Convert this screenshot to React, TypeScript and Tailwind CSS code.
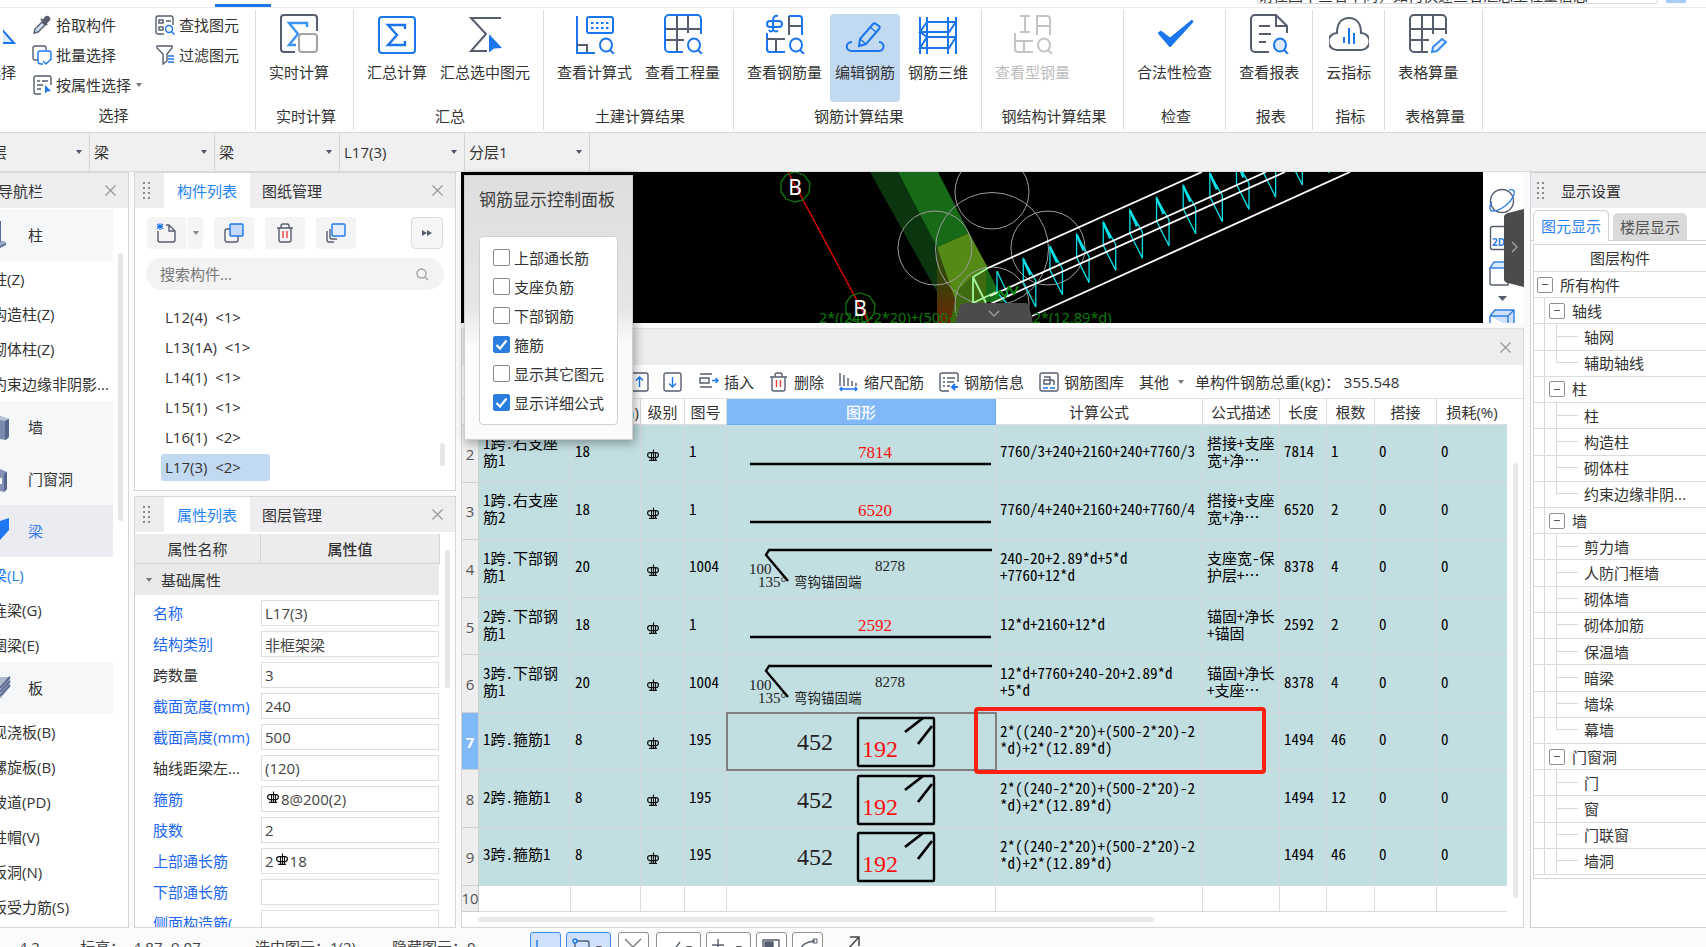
import React from "react";

const TABLE_FONT =
  "font-['Noto_Sans_CJK_SC',sans-serif] [font-feature-settings:'hwid'] text-[15px] leading-[17px] text-black";

/* ---------- shared pieces ---------- */

function Caret({ className = "" }: { className?: string }) {
  return (
    <svg width="6" height="4" viewBox="0 0 6 4" className={className} aria-hidden="true">
      <path d="M0 0h6L3 4z" fill="currentColor" />
    </svg>
  );
}

function Grip() {
  return (
    <svg width="9" height="19" viewBox="0 0 9 19" fill="#8a8a8a" aria-hidden="true" className="shrink-0">
      {[0, 5, 10, 15].map((y) => (
        <g key={y}>
          <rect x="0" y={y + 1} width="2" height="2" />
          <rect x="5" y={y + 1} width="2" height="2" />
        </g>
      ))}
    </svg>
  );
}

function CloseButton() {
  return (
    <button type="button" aria-label="关闭" className="flex h-5 w-5 items-center justify-center">
      <svg width="11" height="11" viewBox="0 0 11 11" stroke="#9b9b9b" strokeWidth="1.3" aria-hidden="true">
        <path d="M.5.5l10 10M10.500.5l-10 10" />
      </svg>
    </button>
  );
}

function Rebar() {
  return (
    <svg width="12" height="13" viewBox="0 0 12 13" fill="none" stroke="#111" strokeWidth="1.200" aria-label="三级钢" className="inline-block">
      <rect x="0.600" y="3.600" width="10.800" height="5" rx="2.500" />
      <path d="M4.500 3v8.500M6.500 0.500v11M8.500 3v8.500M2 11.400h8" strokeWidth="1.100" />
    </svg>
  );
}

/* ---------- ribbon icons ---------- */

const B = "#1b76ee";
const G = "#555d6e";

type IconProps = { children: React.ReactNode };
function Big({ children }: IconProps) {
  return (
    <svg width="40" height="40" viewBox="0 0 40 40" fill="none" strokeWidth="2" stroke={G} aria-hidden="true">
      {children}
    </svg>
  );
}
function Small({ children }: IconProps) {
  return (
    <svg width="20" height="20" viewBox="0 0 20 20" fill="none" strokeWidth="1.400" stroke={G} aria-hidden="true" className="shrink-0">
      {children}
    </svg>
  );
}
const Lens = ({ x = 31, y = 31, c = B, f = "none" }: { x?: number; y?: number; c?: string; f?: string }) => (
  <g stroke={c}>
    <ellipse cx={x} cy={y} rx="6" ry="6.500" fill={f} />
    <path d={`M${x + 4} ${y + 5}l4 4`} />
  </g>
);

const icons = {
  realtime: (
    <Big>
      <path d="M16 38H5a3 3 0 0 1-3-3V4a3 3 0 0 1 3-3h30a3 3 0 0 1 3 3v13" />
      <path d="M28 13V9H10l9 11-9 11h7" stroke="#3a93f8" strokeWidth="2.400" />
      <rect x="20" y="20" width="18" height="18" rx="3" stroke="#a3a3a3" fill="#fff" />
    </Big>
  ),
  sum: (
    <Big>
      <rect x="2" y="3" width="36" height="36" rx="3" stroke={B} />
      <path d="M28 15v-4H11l9 10-9 10h17v-4" stroke={B} strokeWidth="2.400" />
    </Big>
  ),
  sumSel: (
    <Big>
      <path d="M36 4H6l15 16L6 37h16" />
      <path d="M24 20l13 14-8 .500-5 4z" fill={B} stroke="none" />
    </Big>
  ),
  formula: (
    <Big>
      <path d="M2 2v37h18" stroke={B} />
      <path d="M2 31h10v7" />
      <rect x="12" y="3" width="26" height="16" rx="2" stroke={B} />
      <path d="M16 9h19M16 14h19" stroke={B} strokeDasharray="2.500 2.500" />
      <Lens />
    </Big>
  ),
  quantity: (
    <Big>
      <path d="M2 15h36M2 26h19M14 1v37M25 1v18" />
      <path d="M20 38H6a4 4 0 0 1-4-4V5a4 4 0 0 1 4-4h28a4 4 0 0 1 4 4v15" stroke={B} />
      <Lens />
    </Big>
  ),
  rebarQty: (
    <Big>
      <rect x="2" y="7" width="15" height="6" rx="3" stroke={B} />
      <path d="M13 2c-3-1-5 1-5 5v7c0 3 2 4 5 3M4 16c1 2 3 2 4 0" stroke={B} />
      <path d="M24 21V2M24 12h12" />
      <path d="M24 2h10a3 3 0 0 1 3 3v16" stroke={B} />
      <path d="M2 19v16a3 3 0 0 0 3 3h15" stroke={B} />
      <path d="M2 25h18M11 25v13" />
      <Lens />
    </Big>
  ),
  edit: (
    <Big>
      <g stroke={B}>
        <path d="M7 28c-7 0-7 9 0 9h27c6 0 6-9 0-9" />
        <path d="M14 32l1-7 13-15a2 2 0 0 1 3 0l3 2a2 2 0 0 1 0 3L21 30z" />
        <path d="M15 25l6 5M25 13l6 5" strokeWidth="1.400" />
      </g>
    </Big>
  ),
  rebar3d: (
    <Big>
      <g stroke={B}>
        <path d="M2 3v37M9 3v37M30 3v37M38 3v37" />
        <path d="M38 8H9L2 18h29l7-10M38 23H9L2 34h29l7-11M9 23l-7-5M9 8h21" />
      </g>
    </Big>
  ),
  steel: (
    <Big>
      <g stroke="#c4c4c4">
        <path d="M7 2h10M12 2v16M7 18h10M24 21V2h10a3 3 0 0 1 3 3v16M24 12h12" />
        <path d="M2 19v16a3 3 0 0 0 3 3h15M2 27h18M11 27v11" />
      </g>
      <Lens c="#c4c4c4" />
    </Big>
  ),
  check: (
    <Big>
      <path d="M3 19l3-2 9 7L37 6l1 2-23 25z" fill={B} stroke={B} strokeWidth="1" />
    </Big>
  ),
  report: (
    <Big>
      <path d="M20 38H6a4 4 0 0 1-4-4V5a4 4 0 0 1 4-4h21l11 11v7M27 1v11h11" />
      <path d="M10 12h11M10 20h12M10 28h7" />
      <Lens f="#dcebfd" />
    </Big>
  ),
  cloud: (
    <Big>
      <path d="M8 36a8 8 0 0 1 0-17C8 10 12 4 20 4s12 6 12 15a8 8 0 0 1 0 17z" />
      <path d="M15 23v6M20 14v16M25 19v11" stroke={B} />
    </Big>
  ),
  sheet: (
    <Big>
      <path d="M20 38H6a4 4 0 0 1-4-4V5a4 4 0 0 1 4-4h28a4 4 0 0 1 4 4v15M2 15h36M2 26h19M14 1v37M25 1v19" />
      <path d="M24 38l1-5 9-8 4 3-9 9z" stroke="#3a8bf2" fill="#e3efff" />
    </Big>
  ),
};

function RibbonGroup({ title, className = "", children }: { title: string; className?: string; children: React.ReactNode }) {
  return (
    <section className={`my-0.5 flex shrink-0 flex-col border-r border-[#dcdcdc] pl-2 pr-2 ${className}`}>
      <div className="flex h-[92px] gap-[3px] pt-1">{children}</div>
      <h2 className="flex h-8 items-center justify-center pl-[3px] text-[15px] font-normal">{title}</h2>
    </section>
  );
}

function RibbonButton({ icon, label, active, disabled }: { icon: React.ReactNode; label: string; active?: boolean; disabled?: boolean }) {
  return (
    <button
      type="button"
      disabled={disabled}
      className={`flex h-[88px] shrink-0 flex-col items-center rounded px-[5px] ${active ? "bg-[#c2d9f2]" : ""} ${disabled ? "text-[#bdbdbd]" : ""}`}
    >
      {icon}
      <span className="mt-[7px] whitespace-nowrap leading-[22px]">{label}</span>
    </button>
  );
}

function SmallButton({ icon, label, menu }: { icon: React.ReactNode; label: string; menu?: boolean }) {
  return (
    <button type="button" className="flex h-[30px] items-center gap-1 whitespace-nowrap">
      {icon}
      <span>{label}</span>
      {menu && <Caret className="ml-px text-[#777]" />}
    </button>
  );
}

function Ribbon() {
  return (
    <div className="flex h-[126px] shrink-0 overflow-hidden border-y border-t-[#ececec] border-b-[#dadada] bg-white">
      <section className="my-0.5 flex w-64 shrink-0 flex-col border-r border-[#dcdcdc]">
        <div className="flex h-[92px]">
          <button type="button" className="flex w-4 flex-col items-end overflow-hidden pt-1">
            <svg width="13" height="40" viewBox="0 0 13 40" fill="#dcebfd" stroke={B} strokeWidth="2" aria-hidden="true">
              <path d="M-8 8L11 29H-8" />
            </svg>
            <span className="mt-[7px] whitespace-nowrap leading-[22px]">选择</span>
          </button>
          <div className="ml-4 flex flex-col">
            <SmallButton
              label="拾取构件"
              icon={
                <Small>
                  <path d="M2 18l1-4 7-7 3 3-7 7z" fill="#cfe0f6" />
                  <path d="M9 4l6 6M11 6l3-4a2.200 2.200 0 0 1 3 3l-4 4z" fill={G} strokeWidth="2" />
                </Small>
              }
            />
            <SmallButton
              label="批量选择"
              icon={
                <Small>
                  <path d="M6 15H3a2 2 0 0 1-2-2V3a2 2 0 0 1 2-2h9a2 2 0 0 1 2 2v2" />
                  <path d="M11 19H9a3 3 0 0 1-3-3V8a2 2 0 0 1 2-2h9a2 2 0 0 1 2 2v7M11 16l3 3 5-5" stroke={B} />
                </Small>
              }
            />
            <SmallButton
              menu
              label="按属性选择"
              icon={
                <Small>
                  <path d="M9 19H4a2 2 0 0 1-2-2V3a2 2 0 0 1 2-2h13a2 2 0 0 1 2 2v7M5 6h3M10 6h6M5 10h6M5 14h4" />
                  <path d="M13 10l6 6-4 .500-2 2z" fill={B} stroke="none" />
                </Small>
              }
            />
          </div>
          <div className="ml-[13px] flex flex-col">
            <SmallButton
              label="查找图元"
              icon={
                <Small>
                  <path d="M9 19H3a2 2 0 0 1-2-2V3a2 2 0 0 1 2-2h13a2 2 0 0 1 2 2v7M4 5h4v3H4zM11 6h5M4 12h4v3H4z" />
                  <circle cx="14" cy="14" r="3.500" stroke={B} />
                  <path d="M16.500 16.500l3 3" stroke={B} />
                </Small>
              }
            />
            <SmallButton
              label="过滤图元"
              icon={
                <Small>
                  <path d="M2 1h15v2l-5 6v7l-4 3V9L2 3z" />
                  <path d="M13 11h6M13 14h6M13 17h6" stroke={B} />
                </Small>
              }
            />
          </div>
        </div>
        <h2 className="flex h-8 items-center justify-center pr-7 text-[15px] font-normal">选择</h2>
      </section>
      <RibbonGroup title="实时计算" className="w-[98px]">
        <RibbonButton icon={icons.realtime} label="实时计算" />
      </RibbonGroup>
      <RibbonGroup title="汇总">
        <RibbonButton icon={icons.sum} label="汇总计算" />
        <RibbonButton icon={icons.sumSel} label="汇总选中图元" />
      </RibbonGroup>
      <RibbonGroup title="土建计算结果">
        <RibbonButton icon={icons.formula} label="查看计算式" />
        <RibbonButton icon={icons.quantity} label="查看工程量" />
      </RibbonGroup>
      <RibbonGroup title="钢筋计算结果">
        <RibbonButton icon={icons.rebarQty} label="查看钢筋量" />
        <RibbonButton icon={icons.edit} label="编辑钢筋" active />
        <RibbonButton icon={icons.rebar3d} label="钢筋三维" />
      </RibbonGroup>
      <RibbonGroup title="钢结构计算结果" className="w-[142px]">
        <RibbonButton icon={icons.steel} label="查看型钢量" disabled />
      </RibbonGroup>
      <RibbonGroup title="检查">
        <RibbonButton icon={icons.check} label="合法性检查" />
      </RibbonGroup>
      <RibbonGroup title="报表">
        <RibbonButton icon={icons.report} label="查看报表" />
      </RibbonGroup>
      <RibbonGroup title="指标">
        <RibbonButton icon={icons.cloud} label="云指标" />
      </RibbonGroup>
      <RibbonGroup title="表格算量" className="w-[98px]">
        <RibbonButton icon={icons.sheet} label="表格算量" />
      </RibbonGroup>
    </div>
  );
}

/* ---------- selector bar ---------- */

function Picker({ label, value, clipped }: { label: string; value: string; clipped?: boolean }) {
  return (
    <div className={`relative flex shrink-0 items-center overflow-hidden border-r border-[#d4d4d4] ${clipped ? "w-[90px]" : "w-[125px]"}`}>
      <select aria-label={label} className={`h-full w-full appearance-none bg-transparent pl-1 outline-none ${clipped ? "-ml-3" : ""}`}>
        <option>{value}</option>
      </select>
      <Caret className="pointer-events-none absolute right-[7px] text-[#4e5669]" />
    </div>
  );
}

/* ---------- left navigation ---------- */

type NavItem = { name: string; kind: "cat" | "sub"; active?: boolean };
const navItems: NavItem[] = [
  { name: "柱", kind: "cat" },
  { name: "柱(Z)", kind: "sub" },
  { name: "构造柱(Z)", kind: "sub" },
  { name: "砌体柱(Z)", kind: "sub" },
  { name: "约束边缘非阴影...", kind: "sub" },
  { name: "墙", kind: "cat" },
  { name: "门窗洞", kind: "cat" },
  { name: "梁", kind: "cat", active: true },
  { name: "梁(L)", kind: "sub", active: true },
  { name: "连梁(G)", kind: "sub" },
  { name: "圈梁(E)", kind: "sub" },
  { name: "板", kind: "cat" },
  { name: "现浇板(B)", kind: "sub" },
  { name: "螺旋板(B)", kind: "sub" },
  { name: "坡道(PD)", kind: "sub" },
  { name: "柱帽(V)", kind: "sub" },
  { name: "板洞(N)", kind: "sub" },
  { name: "板受力筋(S)", kind: "sub" },
];

const navIcons: Record<string, React.ReactNode> = {
  柱: (
    <g>
      <path d="M0 0h1v20l5 2v2l-6 3z" fill="#5c6b92" />
      <path d="M0 21l4-1 2 2-6 3z" fill="#9aa7c6" />
    </g>
  ),
  墙: (
    <g>
      <path d="M0 3l9 3v18l-3 3-6-1z" fill="#7b8bb0" />
      <path d="M0 3l9 3-4 2-5-1z" fill="#b6c0d6" />
      <path d="M5 8l4-2v18l-4 3z" fill="#55668f" />
    </g>
  ),
  门窗洞: (
    <g>
      <path d="M0 4l7 3v17l-3 3-4-1z" fill="#8592b5" />
      <path d="M4 9l3-2v17l-3 3z" fill="#55668f" />
      <path d="M0 13h2v6H0z" fill="#fff" />
    </g>
  ),
  梁: <path d="M0 4l9-3v12l-9 10z" fill="#1f78f0" />,
  板: (
    <g>
      <path d="M0 3h10v10L0 25z" fill="#b1bbd0" />
      <path d="M0 14L10 3M0 18L10 7M0 22l10-11" stroke="#5c6b92" strokeWidth="2" />
    </g>
  ),
};

function NavPanel() {
  return (
    <aside className="flex w-[129px] shrink-0 flex-col overflow-hidden border-y border-r border-[#d6d6d8] bg-white">
      <header className="flex h-[35px] shrink-0 items-center justify-between bg-[#eeeef1] pr-2">
        <h2 className="-ml-[2px] text-[15px] font-normal">导航栏</h2>
        <CloseButton />
      </header>
      <nav className="flex min-h-0 flex-1 items-start justify-between overflow-hidden">
        <ul className="w-[113px] pt-px">
          {navItems.map((it) =>
            it.kind === "cat" ? (
              <li key={it.name} className={it.active ? "bg-[#eaecf1] text-[#3f7ff0]" : "bg-[#f5f7f9]"}>
                <button type="button" className="flex h-[52px] w-full items-center">
                  <svg width="12" height="28" viewBox="0 0 12 28" aria-hidden="true">
                    {navIcons[it.name]}
                  </svg>
                  <span className="pl-4">{it.name}</span>
                </button>
              </li>
            ) : (
              <li key={it.name} className={`-ml-2 flex h-[35px] items-center whitespace-nowrap ${it.active ? "text-[#1b7cf2]" : ""}`}>
                <a href="#component">{it.name}</a>
              </li>
            ),
          )}
        </ul>
        <div className="mr-[5px] mt-[45px] h-[268px] w-[5px] rounded-full bg-[#e6e6e6]" />
      </nav>
    </aside>
  );
}

/* ---------- component list and properties ---------- */

function TabHeader({ tabs }: { tabs: [string, string] }) {
  return (
    <header className="flex h-[35px] shrink-0 items-center bg-[#eeeef1] pl-2 pr-2">
      <Grip />
      <div role="tablist" className="ml-3 flex h-full flex-1">
        <button role="tab" aria-selected="true" type="button" className="bg-white px-[13px] text-[#1f82f5]">
          {tabs[0]}
        </button>
        <button role="tab" aria-selected="false" type="button" className="px-3">
          {tabs[1]}
        </button>
      </div>
      <CloseButton />
    </header>
  );
}

const components = ["L12(4)  <1>", "L13(1A)  <1>", "L14(1)  <1>", "L15(1)  <1>", "L16(1)  <2>", "L17(3)  <2>"];

function ToolButton({ label, children }: { label: string; children: React.ReactNode }) {
  return (
    <button type="button" aria-label={label} className="flex h-8 w-10 items-center justify-center rounded bg-[#f4f4f4]">
      {children}
    </button>
  );
}

function ComponentPanel() {
  return (
    <section className="flex h-[319px] shrink-0 flex-col border border-[#d6d6d8] bg-white">
      <TabHeader tabs={["构件列表", "图纸管理"]} />
      <div className="mt-[9px] flex items-center gap-[11px] pl-3 pr-3">
        <div className="flex gap-px">
          <ToolButton label="新建">
            <Small>
              <path d="M1 8v9a2 2 0 0 0 2 2h13a2 2 0 0 0 2-2V8l-6-6H9M12 2v6h6" />
              <path d="M0 1l6 5M6 1L0 6M0 3.500h6M3 0v7" stroke={B} strokeWidth="1.200" />
            </Small>
          </ToolButton>
          <button type="button" aria-label="更多新建" className="flex h-8 w-[15px] items-center justify-center rounded-r bg-[#f4f4f4] text-[#888]">
            <Caret />
          </button>
        </div>
        <ToolButton label="复制">
          <Small>
            <rect x="1" y="6" width="13" height="13" rx="2" />
            <rect x="6" y="1" width="13" height="12" rx="1" fill="#c5daf6" stroke={B} />
          </Small>
        </ToolButton>
        <ToolButton label="删除">
          <Small>
            <path d="M2 5h16M4 5v12a2 2 0 0 0 2 2h8a2 2 0 0 0 2-2V5M6 5V3a2 2 0 0 1 2-2h4a2 2 0 0 1 2 2v2" />
            <path d="M8 8v7M12 8v7" stroke="#e8413c" />
          </Small>
        </ToolButton>
        <ToolButton label="层间复制">
          <Small>
            <path d="M1 8v9a2 2 0 0 0 2 2h5M4 6v8a2 2 0 0 0 2 2h5" />
            <rect x="6" y="1" width="13" height="12" rx="1" fill="#e3efff" stroke={B} />
          </Small>
        </ToolButton>
        <button type="button" aria-label="展开" className="ml-auto flex h-8 w-8 items-center justify-center rounded border border-[#dcdcdc] bg-[#f6f6f6]">
          <svg width="10" height="6" viewBox="0 0 10 6" fill={G} aria-hidden="true">
            <path d="M0 0l5 3-5 3zM5 0l5 3-5 3z" />
          </svg>
        </button>
      </div>
      <label className="mx-[11px] mt-[9px] flex h-8 items-center rounded-full bg-[#f3f3f3] pl-[14px] pr-[15px]">
        <input type="text" aria-label="搜索构件" placeholder="搜索构件..." className="min-w-0 flex-1 bg-transparent outline-none placeholder:text-[#777]" />
        <svg width="13" height="13" viewBox="0 0 13 13" fill="none" stroke="#a8a8a8" strokeWidth="1.500" aria-hidden="true">
          <circle cx="5.500" cy="5.500" r="4.500" />
          <path d="M9 9l3 3" />
        </svg>
      </label>
      <div className="mt-3 flex items-end justify-between pl-[26px] pr-[10px]">
        <ul>
          {components.map((c, i) => (
            <li key={c} className="flex h-[30px] items-center">
              <button
                type="button"
                className={`h-[27px] w-[109px] whitespace-pre rounded-[3px] pl-1 text-left ${i === components.length - 1 ? "bg-[#c2d9f2]" : ""}`}
              >
                {c}
              </button>
            </li>
          ))}
        </ul>
        <div className="mb-4 h-[23px] w-[5px] rounded-full bg-[#e6e6e6]" />
      </div>
    </section>
  );
}

type Prop = { name: string; text: string; key?: boolean };
const props: Prop[] = [
  { name: "名称", text: "L17(3)", key: true },
  { name: "结构类别", text: "非框架梁", key: true },
  { name: "跨数量", text: "3" },
  { name: "截面宽度(mm)", text: "240", key: true },
  { name: "截面高度(mm)", text: "500", key: true },
  { name: "轴线距梁左...", text: "(120)" },
  { name: "箍筋", text: "rebar:|8@200(2)", key: true },
  { name: "肢数", text: "2", key: true },
  { name: "上部通长筋", text: "rebar:2|18", key: true },
  { name: "下部通长筋", text: "", key: true },
  { name: "侧面构造筋(", text: "", key: true },
];

function PropertyValue({ id, text }: { id: string; text: string }) {
  const box = "h-[26px] w-[178px] border border-[#dedede] bg-white pl-[3px] text-[#444]";
  if (text.startsWith("rebar:")) {
    const [before, after] = text.slice(6).split("|");
    return (
      <div className={`flex items-center ${box}`}>
        {before && <span>{before}</span>}
        <span className="mx-0.5 flex items-center pb-1">
          <Rebar />
        </span>
        <input id={id} defaultValue={after} className="min-w-0 flex-1 bg-transparent outline-none" />
      </div>
    );
  }
  return <input id={id} defaultValue={text} className={`${box} outline-none`} />;
}

function PropertyPanel() {
  return (
    <section className="flex min-h-0 flex-1 flex-col overflow-hidden border border-[#d6d6d8] bg-white">
      <TabHeader tabs={["属性列表", "图层管理"]} />
      <div className="mt-0.5 flex min-h-0 flex-1 items-start justify-between overflow-hidden pr-[5px]">
        <div className="w-[305px]">
          <div className="flex h-[30px] border-b border-r border-[#d4d4d4] bg-[#ececec]">
            <div className="flex w-[126px] items-center justify-center border-r border-[#d4d4d4]">属性名称</div>
            <div className="flex flex-1 items-center justify-center font-medium">属性值</div>
          </div>
          <button type="button" className="flex h-[31px] w-[304px] items-center gap-[9px] bg-[#eaeaea] pl-[11px]">
            <Caret className="text-[#777]" />
            基础属性
          </button>
          {props.map((p, i) => (
            <div key={p.name} className="flex h-[31px] items-end pl-[18px]">
              <label htmlFor={`prop-${i}`} className={`w-[108px] whitespace-nowrap leading-[26px] ${p.key ? "text-[#2167f5]" : ""}`}>
                {p.name}
              </label>
              <PropertyValue id={`prop-${i}`} text={p.text} />
            </div>
          ))}
        </div>
        <div className="mt-4 h-[138px] w-[5px] rounded-full bg-[#e6e6e6]" />
      </div>
    </section>
  );
}

/* ---------- model canvas ---------- */

function Canvas() {
  const ties = Array.from({ length: 14 }, (_, i) => i);
  return (
    <svg
      viewBox="461 172 1022 151"
      preserveAspectRatio="xMinYMin slice"
      className="h-full min-w-0 flex-1 bg-black"
      role="img"
      aria-label="模型视图"
    >
      <defs>
        <linearGradient id="soil" x1="0" y1="0" x2="0" y2="1">
          <stop offset="0" stopColor="#2f5210" />
          <stop offset="0.500" stopColor="#3a4008" />
          <stop offset="1" stopColor="#6e2506" />
        </linearGradient>
      </defs>
      <path d="M870 172H898L938 247L950 275V310L937 292Z" fill="#0a350e" />
      <path d="M898 172H938L969 233L937 247Z" fill="#176a17" />
      <path d="M969 233L1004 302H985L950 250Z" fill="#176a17" />
      <path d="M937 247L958 290V323H937Z" fill="url(#soil)" />
      <path d="M937 247L969 233L988 268L972 276V303L958 308Z" fill="#558a17" />
      <path d="M958 290L972 276L986 268V303H961L956 323H950Z" fill="#3f6b10" />
      <g fill="none" stroke="#9b9b9b" strokeWidth="1">
        <circle cx="992" cy="192" r="37" />
        <circle cx="935" cy="248" r="37" />
        <circle cx="1048" cy="248" r="37" />
        <circle cx="992" cy="249" r="56.500" />
        <circle cx="992" cy="304" r="37" />
      </g>
      <g fill="none" stroke="#06e2e8" strokeWidth="1.300">
        <path d="M997 271V292L1009 306M997 271L1009 297" />
        {ties.map((i) => {
          const x = 1023.3 + i * 26.65;
          const y = 259 - i * 12.2;
          return (
            <g key={i}>
              <path d={`M${x} ${y}v23l12.500 25v-26z`} />
              <path d={`M${x} ${y}l7 16`} strokeWidth="2.400" />
            </g>
          );
        })}
      </g>
      <g stroke="#fff" strokeWidth="1.800">
        <path d="M988 268L1202 172" />
        <path d="M990 296L1266 172" />
        <path d="M990 304L1285 172" />
        <path d="M1032 316L1350 172" />
      </g>
      <path d="M988 268L973 277V303M973 277L986 303M973 303L996 292" fill="none" stroke="#a6f7a0" strokeWidth="1.800" />
      <path d="M994 300l6-9 5 6 4-10 5 7 4-8" fill="none" stroke="#0c8a14" strokeWidth="2" />
      <path d="M788 172L869 323" stroke="#e00000" strokeWidth="1.400" />
      <g fill="none" stroke="#0b7a0b" strokeWidth="1.300">
        <path d="M795 172l9 3 6 8-1 10-6 7-8 2-9-3-5-7v-10l5-7z" />
        <path d="M860 293l9 3 6 8-1 10-6 7-8 2-9-3-5-7v-10l5-7z" />
      </g>
      <g fontFamily="'Noto Sans', sans-serif">
        <text x="819" y="323" fontSize="14.500" fill="#0a7a0a">
          2*((240-2*20)+(500-2*20)-2*d)+2*(12.89*d)
        </text>
        <g fill="#fff" fontSize="21" textAnchor="middle">
          <text x="795" y="195">B</text>
          <text x="860" y="316">B</text>
        </g>
      </g>
      <path d="M955 323L960 306Q961 303 964 303H1025Q1028 303 1029 306L1033 323Z" fill="#4b4b4b" />
      <path d="M989 311l5 5 5-5" fill="none" stroke="#9b9b9b" strokeWidth="1.500" />
    </svg>
  );
}

function ViewBar() {
  return (
    <div className="relative flex w-[41px] shrink-0 justify-center overflow-hidden bg-white">
      <svg width="41" height="151" viewBox="0 0 41 151" fill="none" stroke={G} strokeWidth="1.400" aria-label="视图工具">
        <circle cx="19" cy="29" r="11.500" />
        <path d="M26 18c4-1 6 0 5 4-2 8-13 17-21 17-4 0-4-5-1-9" stroke="#3a82e8" />
        <rect x="7.500" y="54.500" width="24" height="23" rx="2" />
        <text x="9" y="74" fontSize="10" fontWeight="700" fill="#2f7de8" stroke="none" fontFamily="'Open Sans', sans-serif">
          2D
        </text>
        <path d="M7 96v15q0 2 2 2h16V96" />
        <path d="M7 96l4-6h20l-4 6z" fill="#dcebfd" stroke="#3a82e8" />
        <path d="M15 124h9l-4.500 5z" fill={G} stroke="none" />
        <path d="M7 144h18v10M7 144v10M7 144l5-6h19v14M25 144l6-6" fill="#cfe1fa" stroke="#2f7de8" />
        <path d="M41 37L25 41Q21 42 21 45V107Q21 110 25 111L41 115Z" fill="#4b4b4b" stroke="none" />
        <path d="M29 70l5 5-5 5" stroke="#a5a5a5" />
      </svg>
    </div>
  );
}

/* ---------- floating panel ---------- */

const toggles: [string, boolean][] = [
  ["上部通长筋", false],
  ["支座负筋", false],
  ["下部钢筋", false],
  ["箍筋", true],
  ["显示其它图元", false],
  ["显示详细公式", true],
];

function TogglePanel() {
  return (
    <div className="absolute left-[3px] top-[3px] z-20 w-[169px] border border-[#cfcfcf] bg-gradient-to-b from-[#dedede] via-[#e6e6e6] via-50% to-[#fafcfc] to-65% px-[14px] pb-[14px] shadow-[2px_3px_10px_rgba(0,0,0,0.35)]">
      <h2 className="flex h-[60px] items-center whitespace-nowrap pb-3 text-[17px] font-normal text-[#3c3c3c]">钢筋显示控制面板</h2>
      <div className="rounded border border-[#cfcfcf] bg-white pb-[7px] pl-[13px] pt-[6px]">
        {toggles.map(([name, on]) => (
          <label key={name} className="flex h-[29px] items-center gap-1">
            <span className="relative flex h-[17px] w-[17px]">
              <input
                type="checkbox"
                defaultChecked={on}
                className="peer h-[17px] w-[17px] appearance-none rounded-[2px] border border-[#8a8a8a] bg-white checked:border-[#2b7de0] checked:bg-[#2b7de0]"
              />
              <svg viewBox="0 0 17 17" className="pointer-events-none absolute inset-0 hidden peer-checked:block" fill="none" stroke="#fff" strokeWidth="2.200" aria-hidden="true">
                <path d="M3.500 9l3.500 3.500L13.500 4.500" />
              </svg>
            </span>
            <span className="whitespace-nowrap">{name}</span>
          </label>
        ))}
      </div>
    </div>
  );
}

/* ---------- rebar table ---------- */

function ShapeFrame({ children }: { children: React.ReactNode }) {
  return (
    <svg width="267" height="56" viewBox="0 0 267 56" className="block" fill="none" stroke="#000" strokeWidth="2.400" fontFamily="'Liberation Serif', 'Noto Sans CJK SC', serif">
      {children}
    </svg>
  );
}

function StraightBar({ value }: { value: string }) {
  return (
    <ShapeFrame>
      <path d="M23 39H264" />
      <text x="148" y="33" fontSize="17" fill="#ff1010" stroke="none" textAnchor="middle">
        {value}
      </text>
    </ShapeFrame>
  );
}

function HookBar() {
  return (
    <ShapeFrame>
      <path d="M265 10H42L39 15L61 41" />
      <g fill="#222" stroke="none" fontSize="15">
        <text x="22" y="34">100</text>
        <text x="31" y="47">135°</text>
        <text x="148" y="31">8278</text>
        <text x="67" y="47" fontSize="13.500">
          弯钩锚固端
        </text>
      </g>
    </ShapeFrame>
  );
}

function StirrupBar() {
  return (
    <ShapeFrame>
      <rect x="131" y="5" width="76" height="48" rx="1" />
      <path d="M178 19L196 5M191 31L205 13" strokeWidth="2.800" />
      <g stroke="none" fontSize="24">
        <text x="70" y="37" fill="#222">
          452
        </text>
        <text x="135" y="44" fill="#ff1010">
          192
        </text>
      </g>
    </ShapeFrame>
  );
}

type Row = { no: number; name: string[]; dia: string; fig: string; shape: React.ReactNode; calc: string[]; desc: string[]; len: string; count: string };
const stirrupCalc = ["2*((240-2*20)+(500-2*20)-2", "*d)+2*(12.89*d)"];
const rows: Row[] = [
  { no: 2, name: ["1跨.右支座", "筋1"], dia: "18", fig: "1", shape: <StraightBar value="7814" />, calc: ["7760/3+240+2160+240+7760/3"], desc: ["搭接+支座", "宽+净…"], len: "7814", count: "1" },
  { no: 3, name: ["1跨.右支座", "筋2"], dia: "18", fig: "1", shape: <StraightBar value="6520" />, calc: ["7760/4+240+2160+240+7760/4"], desc: ["搭接+支座", "宽+净…"], len: "6520", count: "2" },
  { no: 4, name: ["1跨.下部钢", "筋1"], dia: "20", fig: "1004", shape: <HookBar />, calc: ["240-20+2.89*d+5*d", "+7760+12*d"], desc: ["支座宽-保", "护层+…"], len: "8378", count: "4" },
  { no: 5, name: ["2跨.下部钢", "筋1"], dia: "18", fig: "1", shape: <StraightBar value="2592" />, calc: ["12*d+2160+12*d"], desc: ["锚固+净长", "+锚固"], len: "2592", count: "2" },
  { no: 6, name: ["3跨.下部钢", "筋1"], dia: "20", fig: "1004", shape: <HookBar />, calc: ["12*d+7760+240-20+2.89*d", "+5*d"], desc: ["锚固+净长", "+支座…"], len: "8378", count: "4" },
  { no: 7, name: ["1跨.箍筋1"], dia: "8", fig: "195", shape: <StirrupBar />, calc: stirrupCalc, desc: [], len: "1494", count: "46" },
  { no: 8, name: ["2跨.箍筋1"], dia: "8", fig: "195", shape: <StirrupBar />, calc: stirrupCalc, desc: [], len: "1494", count: "12" },
  { no: 9, name: ["3跨.箍筋1"], dia: "8", fig: "195", shape: <StirrupBar />, calc: stirrupCalc, desc: [], len: "1494", count: "46" },
];

const heads = ["筋号", "直径(mm)", "级别", "图号", "图形", "计算公式", "公式描述", "长度", "根数", "搭接", "损耗(%)"];

function Lines({ lines }: { lines: string[] }) {
  return (
    <>
      {lines.map((l) => (
        <div key={l} className="whitespace-nowrap">
          {l}
        </div>
      ))}
    </>
  );
}

function RebarTable() {
  const cell = "border-b border-r border-[#d5dadb] p-0 pl-1 pb-[5px]";
  return (
    <table className="h-full w-full table-fixed border-separate border-spacing-0">
      <colgroup>
        <col className="w-[17px]" />
        <col className="w-[92px]" />
        <col className="w-[70px]" />
        <col className="w-[44px]" />
        <col className="w-[42px]" />
        <col />
        <col className="w-[207px]" />
        <col className="w-[77px]" />
        <col className="w-[47px]" />
        <col className="w-[48px]" />
        <col className="w-[62px]" />
        <col className="w-[70px]" />
      </colgroup>
      <thead>
        <tr className="h-[26px]">
          <th className="border-b border-r border-[#dcdcdc] bg-white p-0" aria-label="序号" />
          {heads.map((h) => (
            <th
              key={h}
              scope="col"
              className={`whitespace-nowrap border-b p-0 leading-[24px] ${h === "图形" ? "border-[#6ba9ee] bg-[#80b8f8] font-medium text-white" : "border-[#dcdcdc] bg-white font-normal"} ${h === "损耗(%)" ? "" : "border-r"}`}
            >
              {h}
            </th>
          ))}
        </tr>
      </thead>
      <tbody className={TABLE_FONT}>
        {rows.map((r) => (
          <tr key={r.no} className="h-[57px] bg-[#c1dee0]">
            <th
              scope="row"
              className={`border-b border-r border-[#cfcfcf] p-0 pt-[2px] text-center font-['Open_Sans',sans-serif] ${r.no === 7 ? "bg-[#80b8f8] font-bold text-white" : "bg-[#eeeeee] font-normal text-[#555]"}`}
            >
              {r.no}
            </th>
            <td className={cell}>
              <Lines lines={r.name} />
            </td>
            <td className={cell}>{r.dia}</td>
            <td className="border-b border-r border-[#d5dadb] p-0 pl-[6px]">
              <Rebar />
            </td>
            <td className={cell}>{r.fig}</td>
            <td className={`border-b border-r border-[#d5dadb] p-0 ${r.no === 7 ? "outline-2 -outline-offset-1 outline-[#808080]" : ""}`}>{r.shape}</td>
            <td className={cell}>
              <Lines lines={r.calc} />
            </td>
            <td className={cell}>
              <Lines lines={r.desc} />
            </td>
            <td className={cell}>{r.len}</td>
            <td className={cell}>{r.count}</td>
            <td className={cell}>0</td>
            <td className="border-b border-[#d5dadb] p-0 pb-[5px] pl-1">0</td>
          </tr>
        ))}
        <tr className="h-[26px] bg-white">
          <th scope="row" className="border-b border-r border-[#cfcfcf] bg-[#eeeeee] p-0 text-center font-['Open_Sans',sans-serif] font-normal text-[#555]">
            <span className="-mx-1">10</span>
          </th>
          {heads.map((h) => (
            <td key={h} className={`border-b border-[#dcdcdc] p-0 ${h === "损耗(%)" ? "" : "border-r"}`} />
          ))}
        </tr>
      </tbody>
    </table>
  );
}

function EditTool({ label, children }: { label: string; children: React.ReactNode }) {
  return (
    <button type="button" className="flex shrink-0 items-center gap-[5px] whitespace-nowrap">
      {children}
      {label}
    </button>
  );
}

function EditPanel() {
  return (
    <section className="flex min-h-0 flex-1 flex-col border border-[#d6d6d8] border-t-[#e0e0e0] bg-white">
      <header className="flex h-9 shrink-0 items-center justify-end bg-[#eeeef1] pr-2">
        <CloseButton />
      </header>
      <div className="flex h-[34px] shrink-0 items-center border-b border-[#e2e2e2] pl-[168px]">
        <button type="button" aria-label="上移">
          <Small>
            <rect x="1" y="1" width="17" height="18" rx="2" />
            <path d="M9.500 15V5M6 8.500L9.500 5 13 8.500" stroke={B} />
          </Small>
        </button>
        <button type="button" aria-label="下移" className="ml-[13px]">
          <Small>
            <rect x="1" y="1" width="17" height="18" rx="2" />
            <path d="M9.500 5v10M6 11.500L9.500 15 13 11.500" stroke={B} />
          </Small>
        </button>
        <div className="ml-4 flex items-center gap-[15px]">
          <EditTool label="插入">
            <Small>
              <path d="M1 2h12M1 15h12M1 6h9v5H1z" />
              <path d="M13 8.500h6M16.500 6l2.500 2.500-2.500 2.500" stroke={B} />
            </Small>
          </EditTool>
          <EditTool label="删除">
            <Small>
              <path d="M1 5h17M3 5v12a2 2 0 0 0 2 2h9a2 2 0 0 0 2-2V5M6 5V3a2 2 0 0 1 2-2h3a2 2 0 0 1 2 2v2" />
              <path d="M7.500 8v7M11.500 8v7" stroke="#e8413c" />
            </Small>
          </EditTool>
          <EditTool label="缩尺配筋">
            <Small>
              <path d="M1 1v13M5 3v11M9 6v8M13 9v5M17 11v3" />
              <path d="M1 17h17M3 15l-2 2 2 2M16 15l2 2-2 2" stroke={B} />
            </Small>
          </EditTool>
          <EditTool label="钢筋信息">
            <Small>
              <path d="M10 19H3a2 2 0 0 1-2-2V3a2 2 0 0 1 2-2h14a2 2 0 0 1 2 2v7M4 6h2M8 6h8M4 10h2M8 10h7M4 14h2M8 14h3" />
              <path d="M19 15h-6M16 12l-3 3 3 3" stroke={B} strokeWidth="2" />
            </Small>
          </EditTool>
          <EditTool label="钢筋图库">
            <Small>
              <rect x="1" y="1" width="18" height="18" rx="2" />
              <path d="M5 5h6v7H5V8h8a2 2 0 0 1 2 2v3" />
              <path d="M4 16h12" stroke={B} strokeDasharray="5 2" />
            </Small>
          </EditTool>
          <button type="button" className="flex items-center gap-[9px] whitespace-nowrap">
            其他
            <Caret className="text-[#777]" />
          </button>
          <span className="-ml-1 whitespace-nowrap">单构件钢筋总重(kg)： 355.548</span>
        </div>
      </div>
      <div className="flex min-h-0 flex-1">
        <div className="relative min-w-0 flex-1">
          <RebarTable />
          <div className="pointer-events-none absolute right-[241px] top-[308px] h-[67px] w-[292px] rounded border-[4px] border-[#ff2014]" />
        </div>
        <div className="flex w-4 justify-center">
          <div className="mb-[14px] mt-16 w-[5px] rounded-full bg-[#e8e8e8]" />
        </div>
      </div>
      <div className="flex h-[15px] shrink-0 items-center pl-4">
        <div className="h-[5px] w-[676px] rounded-full bg-[#e8e8e8]" />
      </div>
    </section>
  );
}

/* ---------- display settings ---------- */

type Node = { name: string; level: 0 | 1 | 2; last?: boolean };
const tree: Node[] = [
  { name: "所有构件", level: 0 },
  { name: "轴线", level: 1 },
  { name: "轴网", level: 2 },
  { name: "辅助轴线", level: 2, last: true },
  { name: "柱", level: 1 },
  { name: "柱", level: 2 },
  { name: "构造柱", level: 2 },
  { name: "砌体柱", level: 2 },
  { name: "约束边缘非阴...", level: 2, last: true },
  { name: "墙", level: 1 },
  { name: "剪力墙", level: 2 },
  { name: "人防门框墙", level: 2 },
  { name: "砌体墙", level: 2 },
  { name: "砌体加筋", level: 2 },
  { name: "保温墙", level: 2 },
  { name: "暗梁", level: 2 },
  { name: "墙垛", level: 2 },
  { name: "幕墙", level: 2, last: true },
  { name: "门窗洞", level: 1 },
  { name: "门", level: 2 },
  { name: "窗", level: 2 },
  { name: "门联窗", level: 2 },
  { name: "墙洞", level: 2 },
];

function Fold() {
  return (
    <button type="button" aria-label="折叠" className="flex h-4 w-4 shrink-0 items-center justify-center rounded-[2px] border border-[#8f8f8f] bg-white">
      <span className="h-px w-[6px] bg-[#555]" />
    </button>
  );
}

function TreeRow({ node }: { node: Node }) {
  return (
    <li className="flex min-h-0 flex-1 items-stretch border-b border-[#dcdcdc]">
      {node.level === 0 && (
        <div className="flex items-center gap-[7px] pl-[3px]">
          <Fold />
          {node.name}
        </div>
      )}
      {node.level === 1 && (
        <>
          <span className="ml-[10px] w-[5px] border-l border-[#d8d8d8]" />
          <div className="flex items-center gap-[7px]">
            <Fold />
            {node.name}
          </div>
        </>
      )}
      {node.level === 2 && (
        <>
          <span className="ml-[10px] w-3 border-l border-[#d8d8d8]" />
          <span className="flex w-[22px] flex-col">
            <span className="h-1/2 border-b border-l border-[#d8d8d8]" />
            <span className={`h-1/2 border-[#d8d8d8] ${node.last ? "" : "border-l"}`} />
          </span>
          <span className="flex items-center whitespace-nowrap pl-[6px]">{node.name}</span>
        </>
      )}
    </li>
  );
}

function DisplayPanel() {
  return (
    <aside className="flex w-44 shrink-0 flex-col border-y border-l border-[#cdd0d6] bg-white">
      <header className="flex h-[35px] shrink-0 items-center gap-[15px] bg-[#eeeef1] pl-[6px]">
        <Grip />
        <h2 className="text-[15px] font-normal">显示设置</h2>
      </header>
      <div role="tablist" className="flex h-[33px] shrink-0 items-end gap-1 border-b border-[#cdd0d6] pl-0.5">
        <button role="tab" aria-selected="true" type="button" className="-mb-px h-[31px] rounded-t-[5px] border border-b-0 border-[#cdd0d6] bg-white px-[7px] text-[#2f82f2]">
          图元显示
        </button>
        <button role="tab" aria-selected="false" type="button" className="h-[27px] rounded-t-[5px] bg-[#dadada] px-[7px] text-[#555]">
          楼层显示
        </button>
      </div>
      <div className="mb-12 ml-[2px] mt-[3px] flex min-h-0 flex-1 flex-col border-b border-l border-t border-[#d4d4d4]">
        <div className="flex h-[27px] shrink-0 items-center justify-center border-b border-[#dcdcdc]">图层构件</div>
        <ul className="flex min-h-0 flex-1 flex-col pb-[3px]">
          {tree.map((n, i) => (
            <TreeRow key={i} node={n} />
          ))}
        </ul>
      </div>
    </aside>
  );
}

/* ---------- status bar ---------- */

function StatusButton({ label, on, menu, children }: { label: string; on?: boolean; menu?: boolean; children: React.ReactNode }) {
  return (
    <button
      type="button"
      aria-label={label}
      className={`flex h-[30px] items-start gap-1 rounded-[3px] border px-[5px] pt-[5px] ${menu ? "w-[45px]" : "w-[31px]"} ${on ? "border-[#3d8bf0] bg-[#cfe0fa]" : "border-[#8f8f8f] bg-white"}`}
    >
      <Small>{children}</Small>
      {menu && <Caret className="mt-2 shrink-0 text-[#555]" />}
    </button>
  );
}

function StatusBar() {
  return (
    <footer className="flex h-[19px] shrink-0 items-start overflow-hidden bg-[#fbfbfb] text-[#444]">
      <div className="flex w-[530px] shrink-0 items-start whitespace-nowrap pt-[9px]">
        <span className="-ml-[38px] w-[118px] shrink-0">层高：&nbsp;&nbsp; 4.2</span>
        <span className="w-[175px] shrink-0">标高：&nbsp; 4.87~9.07</span>
        <span className="w-[137px] shrink-0">选中图元：1(2)</span>
        <span>隐藏图元：0</span>
      </div>
      <div className="flex gap-[5px] pt-1">
        <StatusButton label="正交" on>
          <path d="M1 2v16h16" stroke={B} />
        </StatusButton>
        <StatusButton label="捕捉" on menu>
          <path d="M5 3h10a2 2 0 0 1 2 2v13M3 5v13" />
          <circle cx="3" cy="3" r="2" stroke={B} />
        </StatusButton>
        <div className="ml-0.5 flex gap-[7px]">
          <StatusButton label="交点">
            <path d="M1 1l8 8 8-8M9 9v8" stroke="#777" />
          </StatusButton>
          <StatusButton label="垂点" menu>
            <path d="M4 12l5 4 9-12" />
          </StatusButton>
        </div>
        <StatusButton label="中点" menu>
          <path d="M6 1v12M0 7h12" />
        </StatusButton>
        <StatusButton label="顶点">
          <path d="M1 2h16v15H1z" />
          <path d="M3 4h8v12H3z" fill={G} />
        </StatusButton>
        <StatusButton label="坐标">
          <path d="M1 16C3 6 8 4 17 3" />
          <path d="M15 1h4v4h-4z" strokeWidth="1" />
        </StatusButton>
        <svg width="20" height="20" viewBox="0 0 20 20" fill="none" stroke="#444" strokeWidth="1.500" aria-hidden="true" className="ml-4 mt-0.5">
          <path d="M4 15L15 3M6 3h9v9" />
        </svg>
      </div>
    </footer>
  );
}

/* ---------- page ---------- */

export default function App() {
  return (
    <div className="flex h-screen w-full flex-col overflow-hidden bg-[#fafafa] font-['Open_Sans','Noto_Sans_CJK_SC',sans-serif] text-[15px] leading-5 text-[#333]">
      <div className="flex h-[7px] shrink-0 items-end overflow-hidden bg-white">
        <div className="ml-[215px] h-[3px] w-14 bg-[#1f76ea]" />
        <div className="mb-[3px] ml-auto mr-2 flex w-[401px] items-end rounded-b border border-t-0 border-[#d8d8d8]">
          <span className="whitespace-nowrap leading-4">请在图中查看不同，如何快速查看汇总工程量信息</span>
        </div>
        <div className="mb-1 mr-5 h-4 w-5 bg-[#a9cdf8]" />
      </div>
      <Ribbon />
      <div className="flex h-[39px] shrink-0 border-b border-[#dcdcdc] bg-[#f0f0f0]">
        <Picker label="楼层" value="层" clipped />
        <Picker label="构件大类" value="梁" />
        <Picker label="构件类型" value="梁" />
        <Picker label="构件名称" value="L17(3)" />
        <Picker label="分层" value="分层1" />
      </div>
      <main className="flex min-h-0 flex-1">
        <NavPanel />
        <div className="ml-[5px] flex w-[322px] shrink-0 flex-col gap-[5px]">
          <ComponentPanel />
          <PropertyPanel />
        </div>
        <div className="relative ml-[5px] mr-[6px] flex min-w-0 flex-1 flex-col gap-[5px]">
          <div className="flex h-[151px] shrink-0">
            <Canvas />
            <ViewBar />
          </div>
          <EditPanel />
          <TogglePanel />
        </div>
        <DisplayPanel />
      </main>
      <StatusBar />
    </div>
  );
}
